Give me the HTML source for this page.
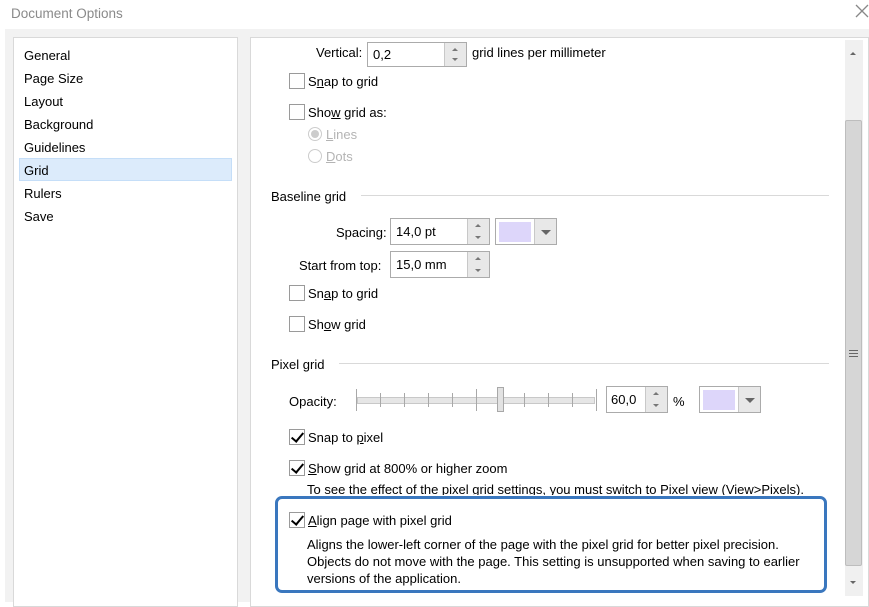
<!DOCTYPE html>
<html><head><style>
*{margin:0;padding:0;box-sizing:border-box}
body{width:869px;height:602px;background:#fff;font-family:"Liberation Sans",sans-serif;font-size:13px;color:#000;position:relative;overflow:hidden}
.a{position:absolute;white-space:nowrap}
.t{position:absolute;white-space:nowrap;line-height:16px}
.cb{position:absolute;width:16px;height:16px;border:1px solid #9a9a9a;background:#fff}
.cb.c::after{content:"";position:absolute;left:4px;top:0px;width:5px;height:10px;border:solid #000;border-width:0 2.5px 2.5px 0;transform:rotate(40deg)}
.rd{position:absolute;width:14px;height:14px;border:1px solid #ccc;border-radius:50%;background:#fff}
.in{position:absolute;border:1px solid #ababab;background:#fff}
.sp{position:absolute;right:0;top:0;bottom:0;width:22px;background:#e8e8e8;border-left:1px solid #c8c8c8}
.sp::before{content:"";position:absolute;left:7px;top:5px;border:3px solid transparent;border-bottom:3px solid #777;border-top:0}
.sp::after{content:"";position:absolute;left:7px;bottom:5px;border:3px solid transparent;border-top:3px solid #777;border-bottom:0}
.col{position:absolute;border:1px solid #ababab;background:#fff}
.col i{position:absolute;left:3px;top:3px;width:32px;height:20px;background:#ddd6fa}
.col b{position:absolute;right:0;top:0;bottom:0;width:22px;background:#e8e8e8;border-left:1px solid #c8c8c8}
.col b::after{content:"";position:absolute;left:6px;top:11px;border:5px solid transparent;border-top:5px solid #666;border-bottom:0}
.dis{color:#b4b4b4}
.hr{position:absolute;height:1px;background:#d9d9d9}
u{text-decoration:underline}
</style></head><body>
<div class="a" style="left:11px;top:6px;color:#8a8a8a;font-size:13.5px">Document Options</div>
<svg class="a" style="left:855px;top:4px" width="14" height="14"><path d="M1 1L13 13M13 1L1 13" stroke="#888" stroke-width="1.3"/></svg>
<div class="a" style="left:5px;top:29px;width:864px;height:573px;background:#f2f2f2"></div>
<div class="a" style="left:13px;top:37px;width:225px;height:570px;background:#fff;border:1px solid #d9d9d9"></div>
<div class="a" style="left:19px;top:158px;width:213px;height:23px;background:#dcebfb;border:1px solid #c5def8"></div>
<div class="t" style="left:24px;top:48px">General</div>
<div class="t" style="left:24px;top:71px">Page Size</div>
<div class="t" style="left:24px;top:94px">Layout</div>
<div class="t" style="left:24px;top:117px">Background</div>
<div class="t" style="left:24px;top:140px">Guidelines</div>
<div class="t" style="left:24px;top:163px">Grid</div>
<div class="t" style="left:24px;top:186px">Rulers</div>
<div class="t" style="left:24px;top:209px">Save</div>

<div class="a" style="left:250px;top:37px;width:619px;height:570px;background:#fff;border:1px solid #d9d9d9"></div>
<div class="a" style="left:845px;top:40px;width:18px;height:556px;background:#f0f0f0"></div>
<div class="a" style="left:845px;top:120px;width:17px;height:446px;background:#d6d6d6;border:1px solid #bdbdbd;border-radius:2px"></div>
<div class="a" style="left:849px;top:350px;width:9px;height:1px;background:#666;box-shadow:0 3px #666,0 6px #666"></div>
<div class="a" style="left:850px;top:52px;border:3px solid transparent;border-bottom:3px solid #666;border-top:0"></div>
<div class="a" style="left:850px;top:581px;border:3px solid transparent;border-top:3px solid #666;border-bottom:0"></div>

<div class="t" style="left:316px;top:45px">Vertical:</div>
<div class="in" style="left:367px;top:42px;width:100px;height:25px"><span class="a" style="left:5px;top:4px">0,2</span><div class="sp"></div></div>
<div class="t" style="left:472px;top:45px">grid lines per millimeter</div>
<div class="cb" style="left:289px;top:73px"></div><div class="t" style="left:308px;top:74px">S<u>n</u>ap to grid</div>
<div class="cb" style="left:289px;top:104px"></div><div class="t" style="left:308px;top:105px">Sho<u>w</u> grid as:</div>
<div class="rd" style="left:308px;top:127px"><div class="a" style="left:2px;top:2px;width:8px;height:8px;border-radius:50%;background:#ccc"></div></div><div class="t dis" style="left:326px;top:127px"><u>L</u>ines</div>
<div class="rd" style="left:308px;top:149px"></div><div class="t dis" style="left:326px;top:149px"><u>D</u>ots</div>

<div class="t" style="left:271px;top:189px">Baseline grid</div><div class="hr" style="left:361px;top:195px;width:468px"></div>
<div class="t" style="left:336px;top:225px">Spacing:</div>
<div class="in" style="left:390px;top:218px;width:100px;height:27px"><span class="a" style="left:5px;top:5px">14,0 pt</span><div class="sp"></div></div>
<div class="col" style="left:495px;top:218px;width:62px;height:27px"><i></i><b></b></div>
<div class="t" style="left:299px;top:258px">Start from top:</div>
<div class="in" style="left:390px;top:251px;width:100px;height:27px"><span class="a" style="left:5px;top:5px">15,0 mm</span><div class="sp"></div></div>
<div class="cb" style="left:289px;top:285px"></div><div class="t" style="left:308px;top:286px">Sn<u>a</u>p to grid</div>
<div class="cb" style="left:289px;top:316px"></div><div class="t" style="left:308px;top:317px">Sh<u>o</u>w grid</div>

<div class="t" style="left:271px;top:357px">Pixel grid</div><div class="hr" style="left:339px;top:363px;width:490px"></div>
<div class="t" style="left:289px;top:394px">Opacity:</div>
<div class="a" style="left:357px;top:397px;width:238px;height:7px;background:#e6e6e6;border:1px solid #c8c8c8"></div>
<svg class="a" style="left:356px;top:389px" width="242" height="22"><g stroke="#a8a8a8" stroke-width="1">
<path d="M0.5 0V22M240.5 0V22M24.5 4V18M48.5 4V18M72.5 4V18M96.5 4V18M120.5 0V22M144.5 4V18M168.5 4V18M192.5 4V18M216.5 4V18"/></g></svg>
<div class="a" style="left:497px;top:387px;width:7px;height:25px;background:#e2e2e2;border:1px solid #a8a8a8"></div>
<div class="in" style="left:606px;top:386px;width:62px;height:27px"><span class="a" style="left:4px;top:5px">60,0</span><div class="sp"></div></div>
<div class="t" style="left:673px;top:394px">%</div>
<div class="col" style="left:699px;top:386px;width:62px;height:27px"><i></i><b></b></div>
<div class="cb c" style="left:289px;top:429px"></div><div class="t" style="left:308px;top:430px">Snap to <u>p</u>ixel</div>
<div class="cb c" style="left:289px;top:460px"></div><div class="t" style="left:308px;top:461px"><u>S</u>how grid at 800% or higher zoom</div>
<div class="t" style="left:307px;top:482px;height:13px;overflow:hidden">To see the effect of the pixel grid settings, you must switch to Pixel view (View&gt;Pixels).</div>

<div class="a" style="left:275px;top:496px;width:552px;height:97px;border:3.5px solid #3a77be;border-radius:7px;background:#fff"></div>
<div class="cb c" style="left:289px;top:512px"></div><div class="t" style="left:308px;top:513px"><u>A</u>lign page with pixel grid</div>
<div class="t" style="left:307px;top:536px;line-height:17px">Aligns the lower-left corner of the page with the pixel grid for better pixel precision.<br>Objects do not move with the page. This setting is unsupported when saving to earlier<br>versions of the application.</div>
</body></html>
